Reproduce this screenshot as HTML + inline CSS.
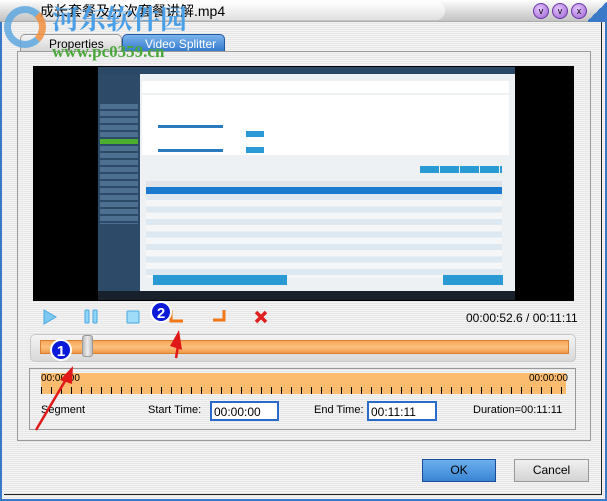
<!DOCTYPE html>
<html><head><meta charset="utf-8"><style>
*{margin:0;padding:0;box-sizing:border-box}
body{width:607px;height:501px;overflow:hidden;font-family:"Liberation Sans","Noto Sans CJK SC",sans-serif;font-size:11px;color:#000;position:relative;
background:repeating-linear-gradient(#f4f4f4 0 1px,#e6e6e6 1px 2px)}
.a{position:absolute}
</style></head><body>
<!-- window borders -->
<div class="a" style="left:0;top:0;width:607px;height:501px;border:2px solid #3a78c8;border-top:none"></div>
<div class="a" style="left:4px;top:22px;width:598px;height:473px;border-right:1px solid #222;border-bottom:1px solid #222"></div>
<!-- title bar -->
<div class="a" style="left:0;top:0;width:607px;height:22px;background:linear-gradient(#ffffff,#d8d8d8 60%,#c4c4c4);border-bottom:1px solid #aaa"></div>
<div class="a" style="left:40px;top:2px;width:405px;height:18px;border-radius:9px;background:linear-gradient(#fff,#e0e0e0)"></div>
<div class="a" style="left:40px;top:2px;font-size:14px;line-height:18px">成长套餐及分次套餐讲解.mp4</div>
<div class="a" style="left:533px;top:3px;width:16px;height:16px;border-radius:50%;background:radial-gradient(circle at 40% 35%,#e6c8ff,#9a5cd0);border:1px solid #6a3aa0;font-size:9px;text-align:center;line-height:14px">v</div>
<div class="a" style="left:552px;top:3px;width:16px;height:16px;border-radius:50%;background:radial-gradient(circle at 40% 35%,#e6c8ff,#9a5cd0);border:1px solid #6a3aa0;font-size:9px;text-align:center;line-height:14px">v</div>
<div class="a" style="left:571px;top:3px;width:16px;height:16px;border-radius:50%;background:radial-gradient(circle at 40% 35%,#e6c8ff,#9a5cd0);border:1px solid #6a3aa0;font-size:9px;text-align:center;line-height:14px">x</div>
<div class="a" style="left:588px;top:0;width:19px;height:22px;background:linear-gradient(135deg,transparent 50%,#3a78c8 50%)"></div>
<!-- tabs -->
<div class="a" style="left:20px;top:34px;width:102px;height:18px;background:linear-gradient(#f4f4f4,#d4d4d4);border:1px solid #999;border-bottom:none;border-radius:5px 5px 0 0;font-size:12px;padding:2px 0 0 28px">Properties</div>
<div class="a" style="left:122px;top:34px;width:103px;height:18px;background:linear-gradient(#7cb4ec,#2f78cc);border:1px solid #1f5aa0;border-bottom:none;border-radius:5px 5px 0 0;color:#fff;font-size:12px;padding:2px 0 0 22px">Video Splitter</div>
<!-- panel -->
<div class="a" style="left:17px;top:51px;width:574px;height:390px;border:1px solid #999"></div>
<!-- watermark -->
<div class="a" style="left:4px;top:6px;width:42px;height:42px;border-radius:50%;border:7px solid #5ea8e0;border-right-color:#f09040;opacity:.85"></div>
<div class="a" style="left:52px;top:2px;font-size:27px;font-weight:bold;color:#4aa0e8;font-family:'Noto Serif CJK SC',serif;line-height:32px">河东软件园</div>
<div class="a" style="left:52px;top:42px;font-size:17px;font-weight:bold;color:#4aa83a;font-family:'Liberation Serif',serif">www.pc0359.cn</div>
<!-- video -->
<div class="a" style="left:33px;top:66px;width:541px;height:235px;background:#000"></div>
<div class="a" style="left:98px;top:67px;width:417px;height:233px;background:#eef1f4">
 <div class="a" style="left:0;top:0;width:417px;height:7px;background:#2a4866"></div>
 <div class="a" style="left:0;top:7px;width:42px;height:217px;background:#2d4b69"></div>
 <div class="a" style="left:2px;top:37px;width:38px;height:120px;background:repeating-linear-gradient(#4d6f90 0 5px,#2d4b69 5px 7px)"></div>
 <div class="a" style="left:2px;top:72px;width:38px;height:5px;background:#4cae2c"></div>
 <div class="a" style="left:44px;top:14px;width:367px;height:12px;background:#fff"></div>
 <div class="a" style="left:44px;top:28px;width:367px;height:60px;background:#fff"></div>
 <div class="a" style="left:57px;top:43px;width:0;height:0"></div>
 <div class="a" style="left:60px;top:58px;width:65px;height:3px;background:#2a7ac0"></div>
 <div class="a" style="left:60px;top:82px;width:65px;height:3px;background:#2a7ac0"></div>
 <div class="a" style="left:148px;top:64px;width:18px;height:6px;background:#2a9ad4"></div>
 <div class="a" style="left:148px;top:80px;width:18px;height:6px;background:#2a9ad4"></div>
 <div class="a" style="left:322px;top:99px;width:82px;height:7px;background:repeating-linear-gradient(90deg,#2a9ad4 0 19px,#eef1f4 19px 20px)"></div>
 <div class="a" style="left:48px;top:114px;width:356px;height:6px;background:#dfe4ea"></div>
 <div class="a" style="left:48px;top:120px;width:356px;height:7px;background:#1a7ad0"></div>
 <div class="a" style="left:48px;top:127px;width:356px;height:84px;background:repeating-linear-gradient(#dde8f0 0 6px,#f4f6f8 6px 12.5px)"></div>
 <div class="a" style="left:55px;top:208px;width:134px;height:10px;background:#2a9ad4"></div>
 <div class="a" style="left:345px;top:208px;width:60px;height:10px;background:#2a9ad4"></div>
 <div class="a" style="left:0;top:224px;width:417px;height:9px;background:#18202c"></div>
</div>
<!-- controls -->
<svg class="a" style="left:0;top:300px" width="300" height="70">
 <path d="M44 10 L56 17 L44 24 Z" fill="#7cc8f0" stroke="#4aa8e0"/>
 <rect x="85" y="10" width="4" height="13" rx="1" fill="#8ed4f6" stroke="#4aa8e0"/>
 <rect x="93" y="10" width="4" height="13" rx="1" fill="#8ed4f6" stroke="#4aa8e0"/>
 <rect x="127" y="11" width="12" height="12" rx="1" fill="#9edcf8" stroke="#4aa8e0"/>
 <path d="M171 10 V21 H183" fill="none" stroke="#f07818" stroke-width="3"/>
 <path d="M213 20 H224 V10" fill="none" stroke="#f07818" stroke-width="3"/>
 <path d="M256 12 L266 22 M266 12 L256 22" stroke="#e02020" stroke-width="3.5"/>
</svg>
<div class="a" style="left:466px;top:311px;font-size:12px">00:00:52.6 / 00:11:11</div>
<!-- slider -->
<div class="a" style="left:30px;top:334px;width:546px;height:28px;border-radius:5px;background:linear-gradient(#f4f4f4,#d8d8d8);border:1px solid #c8c8c8"></div>
<div class="a" style="left:40px;top:340px;width:529px;height:14px;background:linear-gradient(#f6a858,#fcc080 50%,#f09848);border:1px solid #d88030"></div>
<div class="a" style="left:82px;top:335px;width:11px;height:22px;border-radius:3px;background:linear-gradient(90deg,#bbb,#eee,#bbb);border:1px solid #999"></div>
<!-- timeline -->
<div class="a" style="left:29px;top:368px;width:547px;height:62px;border:1px solid #999"></div>
<div class="a" style="left:41px;top:373px;width:525px;height:21px;background:#fcbc70"></div>
<div class="a" style="left:41px;top:381px;width:525px;height:13px;background:repeating-linear-gradient(90deg,#000 0 1px,transparent 1px 10px);-webkit-mask:linear-gradient(transparent 6px,#000 6px)"></div>
<div class="a" style="left:41px;top:373px;font-size:10px">00:00:00</div>
<div class="a" style="left:529px;top:373px;font-size:10px">00:00:00</div>
<div class="a" style="left:41px;top:404px;font-size:11px">Segment</div>
<div class="a" style="left:148px;top:404px;font-size:11px">Start Time:</div>
<div class="a" style="left:210px;top:401px;width:69px;height:20px;border:2px solid #2a6ac8;background:#fff;font-size:12px;padding:2px 0 0 2px">00:00:00</div>
<div class="a" style="left:314px;top:404px;font-size:11px">End Time:</div>
<div class="a" style="left:367px;top:401px;width:70px;height:20px;border:2px solid #2a6ac8;background:#fff;font-size:12px;padding:2px 0 0 2px">00:11:11</div>
<div class="a" style="left:473px;top:404px;font-size:11px">Duration=00:11:11</div>
<!-- buttons -->
<div class="a" style="left:422px;top:459px;width:74px;height:23px;background:linear-gradient(#6cb0ec,#3a84d4);border:1px solid #1a4c98;text-align:center;font-size:12px;line-height:21px">OK</div>
<div class="a" style="left:514px;top:459px;width:75px;height:23px;background:linear-gradient(#f0f0f0,#d4d4d4);border:1px solid #999;text-align:center;font-size:12px;line-height:21px">Cancel</div>
<!-- annotations -->
<svg class="a" style="left:0;top:0" width="607" height="501">
 <path d="M36 430 L68 376" stroke="#e01818" stroke-width="2.5"/>
 <path d="M73 366 L60 380 L72 384 Z" fill="#e01818"/>
 <path d="M176 358 L179 340" stroke="#e01818" stroke-width="2.5"/>
 <path d="M179 330 L170 346 L182 350 Z" fill="#e01818"/>
 <circle cx="161" cy="312" r="10" fill="#0a1ad8" stroke="#fff" stroke-width="2"/>
 <text x="161" y="318" font-size="15" font-weight="bold" fill="#fff" text-anchor="middle" font-family="Liberation Sans">2</text>
 <circle cx="61" cy="350" r="10" fill="#0a1ad8" stroke="#fff" stroke-width="2"/>
 <text x="61" y="356" font-size="15" font-weight="bold" fill="#fff" text-anchor="middle" font-family="Liberation Sans">1</text>
</svg>
</body></html>
